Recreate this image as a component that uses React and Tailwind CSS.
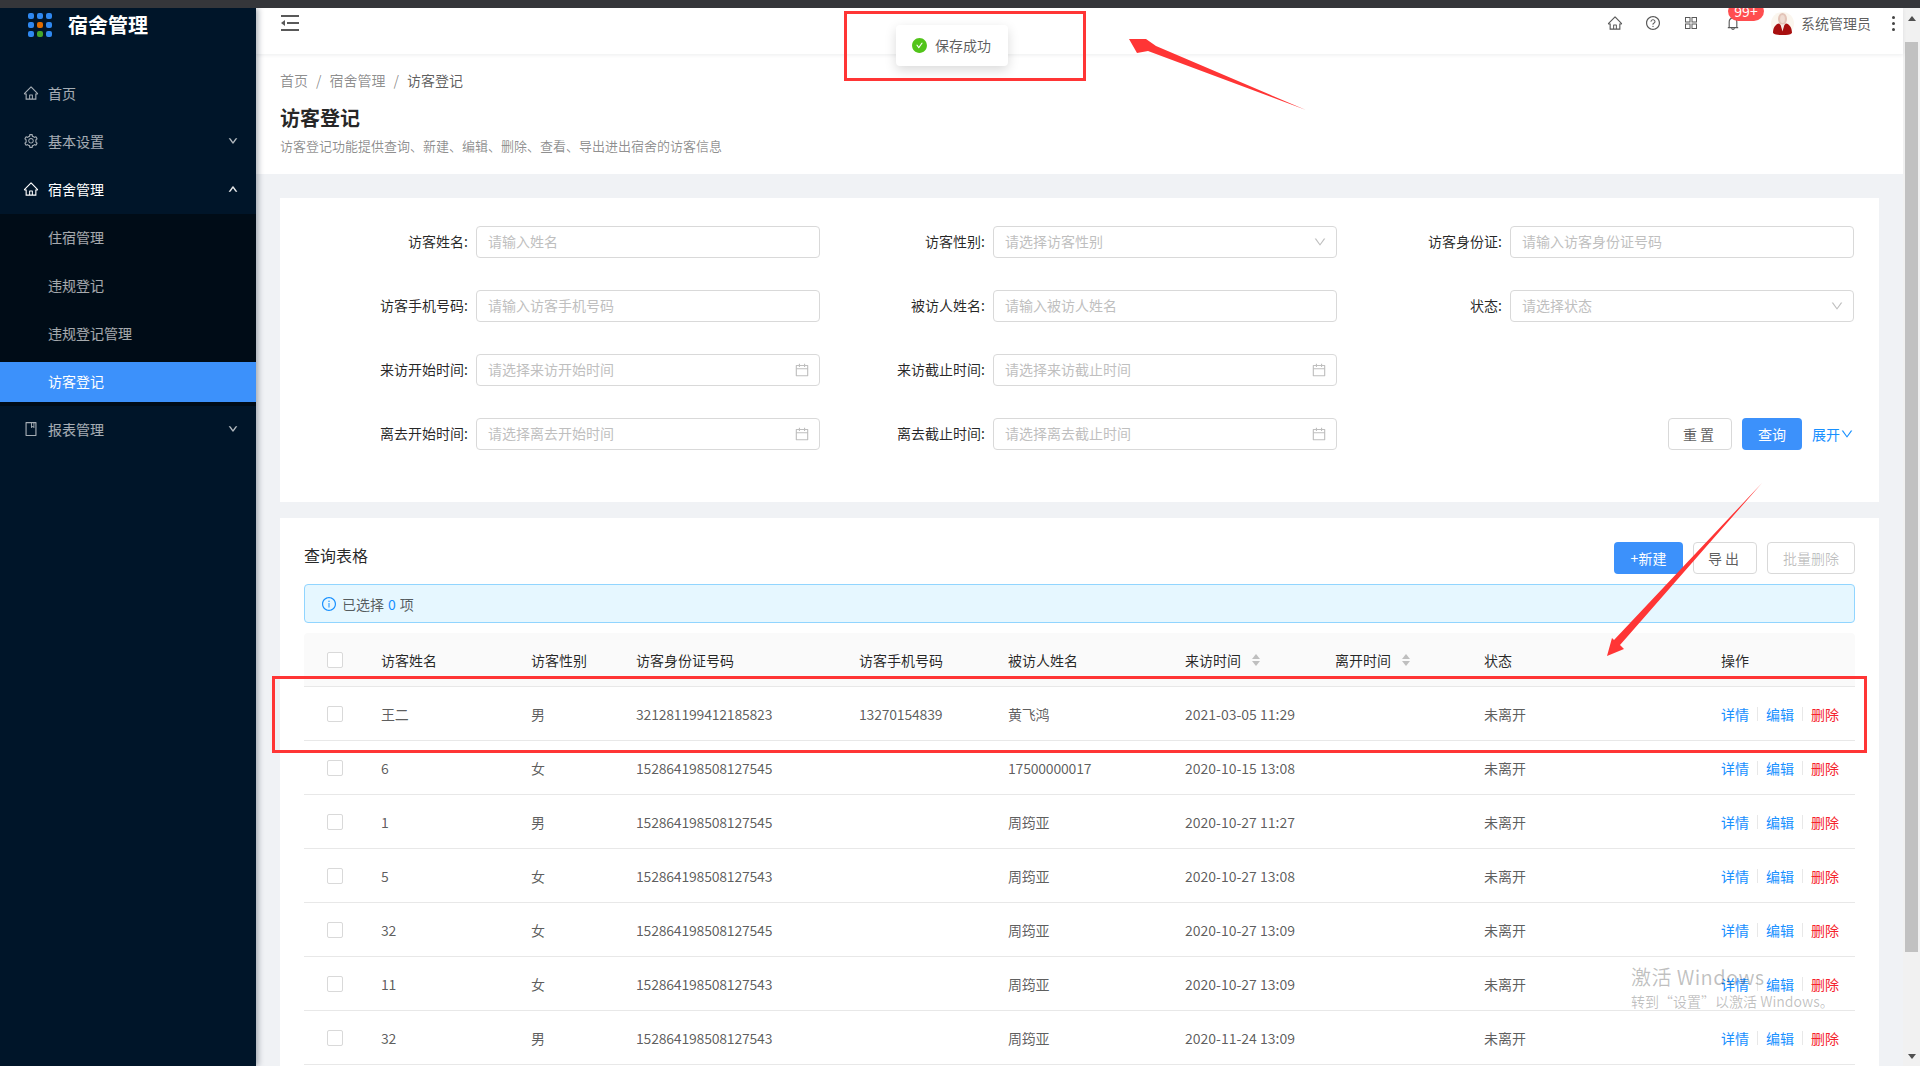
import React from "react";
import {
  AiOutlineHome,
  AiOutlineSetting,
  AiOutlineBook,
  AiOutlineDown,
  AiOutlineUp,
  AiOutlineQuestionCircle,
  AiOutlineBell,
  AiOutlineCalendar,
  AiOutlineInfoCircle,
  AiFillCheckCircle,
} from "react-icons/ai";

const FONT = "font-['Noto_Sans_CJK_SC','Liberation_Sans',sans-serif]";

const subMenu = ["住宿管理", "违规登记", "违规登记管理", "访客登记"];

const fields = [
  { label: "访客姓名", ph: "请输入姓名" },
  { label: "访客性别", ph: "请选择访客性别", type: "select" },
  { label: "访客身份证", ph: "请输入访客身份证号码" },
  { label: "访客手机号码", ph: "请输入访客手机号码" },
  { label: "被访人姓名", ph: "请输入被访人姓名" },
  { label: "状态", ph: "请选择状态", type: "select" },
  { label: "来访开始时间", ph: "请选择来访开始时间", type: "date" },
  { label: "来访截止时间", ph: "请选择来访截止时间", type: "date" },
  null,
  { label: "离去开始时间", ph: "请选择离去开始时间", type: "date" },
  { label: "离去截止时间", ph: "请选择离去截止时间", type: "date" },
];

const rows = [
  ["王二", "男", "321281199412185823", "13270154839", "黄飞鸿", "2021-03-05 11:29"],
  ["6", "女", "152864198508127545", "", "17500000017", "2020-10-15 13:08"],
  ["1", "男", "152864198508127545", "", "周筠亚", "2020-10-27 11:27"],
  ["5", "女", "152864198508127543", "", "周筠亚", "2020-10-27 13:08"],
  ["32", "女", "152864198508127545", "", "周筠亚", "2020-10-27 13:09"],
  ["11", "女", "152864198508127543", "", "周筠亚", "2020-10-27 13:09"],
  ["32", "男", "152864198508127543", "", "周筠亚", "2020-11-24 13:09"],
];

const ROW_GRID = "grid grid-cols-[61px_150px_105px_223px_149px_177px_150px_149px_237px_150px] items-center";

const Logo = () => (
  <div className="grid grid-cols-[6px_6px_6px] gap-[3px]">
    {["#2f88f0", "#2f88f0", "#2f88f0", "#2f88f0", "#e06c00", "#2f88f0", "#2f88f0", "#46a52a", "#2f88f0"].map((c, i) => (
      <span key={i} className="h-[6px] w-[6px] rounded-[2px]" style={{ background: c }} />
    ))}
  </div>
);

const MenuItem = ({ icon, label, arrow, open }) => (
  <div className={`flex h-10 items-center pb-[2px] pl-[23px] pr-[18px] text-sm ${open ? "text-white" : "text-white/65"}`}>
    <span className="mr-[9px] text-base">{icon}</span>
    <span className="flex-1">{label}</span>
    {arrow === "down" && <AiOutlineDown className="text-[10px]" stroke="currentColor" strokeWidth={70} />}
    {arrow === "up" && <AiOutlineUp className="text-[10px]" stroke="currentColor" strokeWidth={70} />}
  </div>
);

const Sidebar = () => (
  <aside className="z-10 flex w-[256px] shrink-0 flex-col bg-[#001529] shadow-[2px_0_6px_rgba(0,21,41,0.35)]">
    <div className="flex h-[32px] items-center pl-[28px] pt-[1px]">
      <Logo />
      <span className="ml-4 text-xl font-bold text-white">宿舍管理</span>
    </div>
    <div className="mt-[34px] flex flex-col gap-2">
      <MenuItem icon={<AiOutlineHome />} label="首页" />
      <MenuItem icon={<AiOutlineSetting />} label="基本设置" arrow="down" />
      <MenuItem icon={<AiOutlineHome />} label="宿舍管理" arrow="up" open />
    </div>
    <div className="mt-1 flex flex-col gap-2 bg-[#000c17] py-1">
      {subMenu.map((s, i) => (
        <div
          key={s}
          className={`flex h-10 items-center pb-[2px] pl-12 text-sm ${i === 3 ? "bg-[#3c91fb] text-white" : "text-white/65"}`}
        >
          {s}
        </div>
      ))}
    </div>
    <div className="mt-1">
      <MenuItem icon={<AiOutlineBook />} label="报表管理" arrow="down" />
    </div>
  </aside>
);

const Avatar = () => (
  <svg width="23" height="23" viewBox="0 0 23 23">
    <circle cx="11.5" cy="11.5" r="11.5" fill="#fbf6ee" />
    <ellipse cx="11.5" cy="7" rx="4.5" ry="6" fill="#e3c4b8" />
    <ellipse cx="11.5" cy="7" rx="2.4" ry="4" fill="#efdcd2" />
    <path d="M2 21c0-6 3-9 6-9.500l3.500 3 3.500-3c3 .5 6 3.500 6 9.500-2 2-5 2-9.500 2S4 23 2 21z" fill="#a80f0f" />
    <path d="M9.500 12.500h4l-2 7z" fill="#f3e9e3" />
  </svg>
);

const Header = () => (
  <header className="relative flex h-[46px] shrink-0 items-center justify-between bg-white pb-4 pl-[25px] pr-[8px] shadow-[0_1px_4px_rgba(0,21,41,0.08)]">
    <svg width="18" height="16" viewBox="0 0 18 16" className="text-[#595959]" fill="currentColor">
      <rect x="0" y="0" width="18" height="2" />
      <rect x="6" y="7" width="12" height="2" />
      <rect x="0" y="14" width="18" height="2" />
      <path d="M0 8l4-3v6z" />
    </svg>
    <div className="flex items-center text-[#595959]">
      <AiOutlineHome className="text-base" />
      <AiOutlineQuestionCircle className="ml-[22px] text-base" />
      <svg width="12" height="12" viewBox="0 0 12 12" className="ml-6" fill="none" stroke="currentColor" strokeWidth="1">
        <rect x="0.500" y="0.500" width="4.500" height="4.500" />
        <rect x="7" y="0.500" width="4.500" height="4.500" />
        <rect x="0.500" y="7" width="4.500" height="4.500" />
        <rect x="7" y="7" width="4.500" height="4.500" />
      </svg>
      <span className="relative ml-[28px] flex">
        <AiOutlineBell className="text-base" />
        <span className="absolute left-[3px] top-[-14px] flex h-5 w-[36px] items-center justify-center rounded-[10px] bg-[#ff4d4f] text-sm text-white">
          99+
        </span>
      </span>
      <span className="ml-[30px] flex">
        <Avatar />
      </span>
      <span className="ml-[7px] text-sm text-black/65">系统管理员</span>
      <span className="ml-[21px] flex flex-col gap-[3px]">
        <i className="h-[3px] w-[3px] rounded-full bg-[#444]" />
        <i className="h-[3px] w-[3px] rounded-full bg-[#444]" />
        <i className="h-[3px] w-[3px] rounded-full bg-[#444]" />
      </span>
    </div>
  </header>
);

const PageHead = () => (
  <div className="flex h-[120px] shrink-0 flex-col bg-white pl-6">
    <div className="mt-4 flex h-5 items-center text-sm text-black/45">
      <span>首页</span>
      <span className="mx-2">/</span>
      <span>宿舍管理</span>
      <span className="mx-2">/</span>
      <span className="text-black/65">访客登记</span>
    </div>
    <h1 className="mt-[14px] text-xl font-bold leading-7 text-black/85">访客登记</h1>
    <p className="mt-[3px] text-[13px] leading-[22px] text-black/45">
      访客登记功能提供查询、新建、编辑、删除、查看、导出进出宿舍的访客信息
    </p>
  </div>
);

const Field = ({ label, ph, type }) => (
  <div className="flex h-8 items-center">
    <label className="w-[173px] pb-[2px] pr-2 text-right text-sm text-black/85">{label}:</label>
    <div className="flex h-8 flex-1 items-center justify-between rounded-[4px] border border-[#d9d9d9] bg-white pl-[11px] pr-[9px] text-sm text-[#bfbfbf]">
      <span className="pb-[2px]">{ph}</span>
      {type === "select" && <AiOutlineDown className="text-sm" />}
      {type === "date" && <AiOutlineCalendar className="text-base" />}
    </div>
  </div>
);

const SearchCard = () => (
  <section className="bg-white pb-[52px] pl-[23px] pr-[25px] pt-[28px]">
    <div className="grid grid-cols-3 gap-y-8">
      {fields.map((f, i) => (f ? <Field key={f.label} {...f} /> : <div key={i} />))}
      <div className="flex h-8 items-center justify-end gap-[10px]">
        <button className="h-8 w-16 rounded-[4px] border border-[#d9d9d9] bg-white text-sm tracking-[3px] text-black/65">重置</button>
        <button className="h-8 w-[60px] rounded-[4px] bg-[#3c91fb] text-sm text-white">查询</button>
        <span className="flex items-center text-sm text-[#1890ff]">
          展开
          <AiOutlineDown className="text-sm" />
        </span>
      </div>
    </div>
  </section>
);

const Sorter = () => (
  <svg width="8" height="12" viewBox="0 0 8 12" className="ml-[11px]" fill="#bfbfbf">
    <path d="M4 0l4 5H0z" />
    <path d="M4 12l4-5H0z" />
  </svg>
);

const TableHead = () => (
  <div className={`${ROW_GRID} h-[53px] rounded-t-[4px] bg-[#fafafa] text-sm text-black/85`}>
    <span className="ml-[23px] mt-px h-4 w-4 rounded-[2px] border border-[#d9d9d9] bg-white" />
    <span className="pl-4">访客姓名</span>
    <span className="pl-4">访客性别</span>
    <span className="pl-4">访客身份证号码</span>
    <span className="pl-4">访客手机号码</span>
    <span className="pl-4">被访人姓名</span>
    <span className="flex items-center pl-4">来访时间<Sorter /></span>
    <span className="flex items-center pl-4">离开时间<Sorter /></span>
    <span className="pl-4">状态</span>
    <span className="pl-4">操作</span>
  </div>
);

const TableRow = ({ row }) => (
  <div className={`${ROW_GRID} h-[54px] border-t border-[#e8e8e8] text-sm text-black/65`}>
    <span className="ml-[23px] mt-px h-4 w-4 rounded-[2px] border border-[#d9d9d9] bg-white" />
    {row.map((cell, i) => (
      <span key={i} className={i === 5 ? "pl-4" : "pl-4 tracking-[-0.2px]"}>{cell}</span>
    ))}
    <span />
    <span className="pl-4">未离开</span>
    <span className="flex items-center pl-4">
      <span className="text-[#1890ff]">详情</span>
      <i className="mx-2 h-[14px] w-px bg-[#e8e8e8]" />
      <span className="text-[#1890ff]">编辑</span>
      <i className="mx-2 h-[14px] w-px bg-[#e8e8e8]" />
      <span className="text-[#f5222d]">删除</span>
    </span>
  </div>
);

const TableCard = () => (
  <section className="mt-4 flex-1 bg-white px-6 pt-6">
    <div className="flex h-8 items-center justify-between">
      <h2 className="pb-[6px] text-base text-black/85">查询表格</h2>
      <div className="flex gap-[10px]">
        <button className="h-8 w-[69px] rounded-[4px] bg-[#3c91fb] text-sm text-white">+新建</button>
        <button className="h-8 w-16 rounded-[4px] border border-[#d9d9d9] bg-white text-sm tracking-[3px] text-black/65">导出</button>
        <button className="h-8 w-[88px] rounded-[4px] border border-[#d9d9d9] bg-white text-sm text-black/25">批量删除</button>
      </div>
    </div>
    <div className="mt-[10px] flex h-[39px] items-center rounded-[4px] border border-[#91d5ff] bg-[#e6f7ff] pl-4 text-sm text-black/65">
      <AiOutlineInfoCircle className="mr-[5px] text-base text-[#1890ff]" />
      已选择<span className="mx-1 text-[#1890ff]">0</span>项
    </div>
    <div className="mt-[10px] border-b border-[#e8e8e8]">
      <TableHead />
      {rows.map((r, i) => (
        <TableRow key={i} row={r} />
      ))}
    </div>
  </section>
);

const Scrollbar = () => (
  <div className="flex w-[17px] shrink-0 flex-col items-center bg-[#f1f1f1] px-[2px]">
    <svg width="8" height="5" viewBox="0 0 8 5" className="mt-[8px]" fill="#505050"><path d="M4 0l4 5H0z" /></svg>
    <div className="mt-[21px] h-[910px] w-[13px] bg-[#c1c1c1]" />
    <svg width="8" height="5" viewBox="0 0 8 5" className="mt-[102px]" fill="#505050"><path d="M4 5l4-5H0z" /></svg>
  </div>
);

export default function App() {
  return (
    <div className={`relative flex h-[1066px] w-[1920px] flex-col overflow-hidden bg-[#f0f2f5] ${FONT}`}>
      <div className="z-20 h-2 shrink-0 bg-[#35363a]" />
      <div className="flex min-h-0 flex-1">
        <Sidebar />
        <main className="flex min-w-0 flex-1 flex-col">
          <Header />
          <PageHead />
          <div className="flex min-h-0 flex-1 flex-col pl-6 pr-6 pt-6">
            <SearchCard />
            <TableCard />
          </div>
        </main>
        <Scrollbar />
      </div>

      {/* toast */}
      <div className="absolute left-[896px] top-[25px] z-30 flex h-[41px] w-[112px] items-center rounded-[4px] bg-white pl-[15px] text-sm text-black/65 shadow-[0_4px_12px_rgba(0,0,0,0.15)]">
        <AiFillCheckCircle className="mr-[7px] text-[17px] text-[#52c41a]" />
        <span className="pb-[2px]">保存成功</span>
      </div>

      {/* windows watermark */}
      <div className="pointer-events-none absolute left-[1631px] top-[964px] z-30 text-black/25">
        <div className="text-[20px] leading-[26px] tracking-[0.4px]">激活 Windows</div>
        <div className="mt-[1px] text-sm leading-[20px]">转到“设置”以激活 Windows。</div>
      </div>

      {/* annotations drawn over the screenshot */}
      <div className="pointer-events-none absolute left-[844px] top-[11px] z-40 h-[70px] w-[242px] border-[3px] border-[#ff3535]" />
      <div className="pointer-events-none absolute left-[272px] top-[676px] z-40 h-[77px] w-[1595px] border-[3px] border-[#ff3535]" />
      <svg className="pointer-events-none absolute left-0 top-0 z-40" width="1920" height="1066" fill="#ff3535">
        <polygon points="1129,39 1146,39 1156,46 1306,110 1148,51 1137,53" />
        <polygon points="1607,656 1624,649 1620,645 1762,483 1614,640 1612,638" />
      </svg>
    </div>
  );
}
